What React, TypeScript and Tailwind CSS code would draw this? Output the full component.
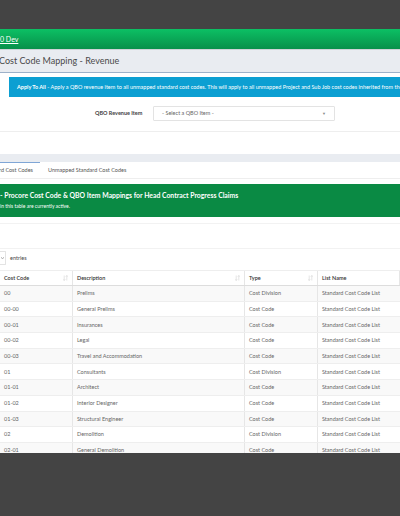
import React from "react";

const rows = [
  { code: "00", desc: "Prelims", type: "Cost Division" },
  { code: "00-00", desc: "General Prelims", type: "Cost Code" },
  { code: "00-01", desc: "Insurances", type: "Cost Code" },
  { code: "00-02", desc: "Legal", type: "Cost Code" },
  { code: "00-03", desc: "Travel and Accommodation", type: "Cost Code" },
  { code: "01", desc: "Consultants", type: "Cost Division" },
  { code: "01-01", desc: "Architect", type: "Cost Code" },
  { code: "01-02", desc: "Interior Designer", type: "Cost Code" },
  { code: "01-03", desc: "Structural Engineer", type: "Cost Code" },
  { code: "02", desc: "Demolition", type: "Cost Division" },
  { code: "02-01", desc: "General Demolition", type: "Cost Code" },
];

const SortIcon = () => (
  <svg width="5" height="6" viewBox="0 0 5 6" className="shrink-0">
    <path d="M1.2 0.5v5M0.2 4.3l1 1.2 1-1.2" stroke="#d4d4d4" strokeWidth="0.6" fill="none" />
    <path d="M3.8 5.5v-5M2.8 1.7l1-1.2 1 1.2" stroke="#d4d4d4" strokeWidth="0.6" fill="none" />
  </svg>
);

const HeaderCell = ({ label, sort, className }: { label: string; sort?: boolean; className: string }) => (
  <div className={`flex items-center justify-between px-[4px] border-r border-[#e6e6e6] ${className}`}>
    <span>{label}</span>
    {sort && <SortIcon />}
  </div>
);

export default function App() {
  return (
    <div
      className="w-[400px] h-[516px] overflow-hidden bg-[#444444] flex flex-col"
      style={{ fontFamily: "Lato, 'Open Sans', sans-serif" }}
    >
      <div className="h-[29px] shrink-0" />

      {/* top nav */}
      <div className="h-[20px] shrink-0 bg-gradient-to-b from-[#0cc064] to-[#08904a] flex items-center">
        <span className="text-[7px] text-white underline">0 Dev</span>
      </div>

      {/* page title */}
      <div className="h-[24px] shrink-0 bg-[#e9ecf1] border-t border-[#cfd3d8] border-b border-b-[#9db1c9] flex items-center">
        <span className="text-[9px] text-[#4a4a4a] -ml-[1px]">Cost Code Mapping - Revenue</span>
      </div>

      <div className="bg-white flex flex-col h-[380px] shrink-0 overflow-hidden">
        {/* alert */}
        <div className="shrink-0 mt-[4px] ml-[9px] h-[20px] bg-[#0c9fd2] flex items-center pl-[8px] whitespace-nowrap overflow-hidden">
          <span className="text-[5.5px] text-white">
            <b>Apply To All</b> - Apply a QBO revenue item to all unmapped standard cost codes. This will apply to all unmapped Project and Sub Job cost codes inherited from the
          </span>
        </div>

        {/* select row */}
        <div className="shrink-0 flex items-center mt-[9px] h-[15px]">
          <span className="ml-[95px] w-[58px] text-[5.5px] font-bold text-[#444]">QBO Revenue Item</span>
          <div className="w-[182px] h-[15px] border border-[#e3e3e3] rounded-[1px] flex items-center justify-between px-[8px]">
            <span className="text-[5.5px] text-[#666]">- Select a QBO Item -</span>
            <span className="text-[4px] text-[#888]">▼</span>
          </div>
        </div>

        <div className="shrink-0 mt-[10px] border-t border-[#eeeeee]" />

        {/* tabs */}
        <div className="shrink-0 mt-[22px] h-[8px] bg-[#e9ecf1]" />
        <div className="shrink-0 h-[17px] flex items-center border-b border-[#eeeeee]">
          <div className="h-full w-[40px] border-t border-[#7fa6d6] flex items-center">
            <span className="text-[5.5px] text-[#555] -ml-[1px]">rd Cost Codes</span>
          </div>
          <span className="ml-[8px] text-[5.5px] text-[#555]">Unmapped Standard Cost Codes</span>
        </div>

        {/* green panel */}
        <div className="shrink-0 mt-[5px] h-[33px] bg-[#0a8a44] flex flex-col justify-center gap-[3px]">
          <span className="text-[6.85px] font-bold text-white whitespace-nowrap">
            - Procore Cost Code &amp; QBO Item Mappings for Head Contract Progress Claims
          </span>
          <span className="text-[5px] text-white">in this table are currently active.</span>
        </div>

        <div className="shrink-0 mt-[6px] border-t border-[#f2f2f2]" />
        <div className="shrink-0 mt-[24px] border-t border-[#f2f2f2]" />

        {/* entries */}
        <div className="shrink-0 mt-[2px] h-[14px] flex items-center">
          <div className="w-[6px] h-[14px] border border-l-0 border-[#e3e3e3] rounded-r-[1px] flex items-center justify-end pr-[1px]">
            <svg width="3" height="2" viewBox="0 0 3 2">
              <path d="M0 0l1.5 2L3 0" fill="none" stroke="#777" strokeWidth="0.5" />
            </svg>
          </div>
          <span className="ml-[4px] text-[5.5px] text-[#444]">entries</span>
        </div>

        {/* table */}
        <div className="shrink-0 mt-[5px] flex flex-col">
          <div className="shrink-0 flex h-[16px] items-stretch border-t border-[#eeeeee] border-b border-b-[#dddddd] text-[5.5px] text-[#333] font-semibold">
            <HeaderCell label="Cost Code" sort className="w-[73px]" />
            <HeaderCell label="Description" sort className="w-[172px]" />
            <HeaderCell label="Type" sort className="w-[73px]" />
            <HeaderCell label="List Name" className="flex-1" />
          </div>
          {rows.map((r, i) => (
            <div
              key={r.code}
              className={`shrink-0 flex h-[15.7px] items-stretch border-b border-[#eeeeee] text-[5.5px] text-[#666] ${
                i % 2 === 0 ? "bg-[#f9f9f9]" : "bg-white"
              }`}
            >
              <div className="w-[73px] px-[4px] flex items-center border-r border-[#e6e6e6]">{r.code}</div>
              <div className="w-[172px] px-[4px] flex items-center border-r border-[#e6e6e6]">{r.desc}</div>
              <div className="w-[73px] px-[4px] flex items-center border-r border-[#e6e6e6]">{r.type}</div>
              <div className="flex-1 px-[4px] flex items-center">Standard Cost Code List</div>
            </div>
          ))}
        </div>
      </div>
    </div>
  );
}
